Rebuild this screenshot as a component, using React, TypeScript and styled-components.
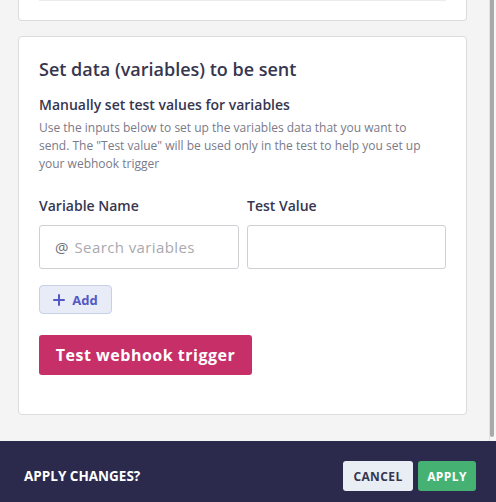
import React from "react";
import styled, { createGlobalStyle } from "styled-components";

const Global = createGlobalStyle`
  html, body { margin: 0; padding: 0; }
  body { font-family: "Open Sans", "Lato", sans-serif; background: #f4f4f4; }
  * { box-sizing: border-box; }
`;

const Page = styled.div`
  width: 496px;
  height: 502px;
  display: flex;
  flex-direction: column;
  overflow: hidden;
  background: #f4f4f4;
`;

const Body = styled.div`
  height: 441px;
  flex-shrink: 0;
  display: flex;
`;

const Content = styled.div`
  flex: 1;
  padding: 0 22px 0 18px;
  display: flex;
  flex-direction: column;
  gap: 15px;
`;

const ScrollTrack = styled.div`
  width: 8px;
  border-left: 1px solid #e2e2e2;
  background: #f6f6f6;
  padding: 0 2px 4px 0;
  display: flex;
`;

const Thumb = styled.div`
  flex: 1;
  background: #a9a9a9;
  border-radius: 0 0 3px 3px;
`;

const CardTail = styled.div`
  height: 21px;
  background: #fff;
  border: 1px solid #dcdcdc;
  border-top: none;
  border-radius: 0 0 4px 4px;
  padding: 0 20px;
`;

const TailLine = styled.div`
  height: 1px;
  background: #ececf0;
`;

const Card = styled.div`
  background: #fff;
  border: 1px solid #dcdcdc;
  border-radius: 4px;
  padding: 19px 20px 0 20px;
  height: 379px;
  display: flex;
  flex-direction: column;
`;

const Title = styled.h2`
  margin: 0;
  font-size: 18px;
  font-weight: 600;
  color: #36364f;
  line-height: 26px;
`;

const Subtitle = styled.h3`
  margin: 13px 0 0;
  font-size: 14px;
  font-weight: 600;
  color: #36364f;
  line-height: 20px;
`;

const Para = styled.p`
  margin: 4px 0 0;
  font-size: 12px;
  line-height: 18px;
  color: #7a7a88;
  padding-right: 10px;
`;

const Grid = styled.div`
  margin-top: 24px;
  display: grid;
  grid-template-columns: 200px 199px;
  column-gap: 8px;
  row-gap: 10px;
`;

const Label = styled.div`
  font-size: 14px;
  font-weight: 600;
  color: #36364f;
  line-height: 18px;
`;

const InputBox = styled.div`
  height: 44px;
  border: 1px solid #cfcfd4;
  border-radius: 3px;
  display: flex;
  align-items: center;
  padding-left: 15px;
  gap: 6px;
  color: #a9a9b0;
  font-size: 15px;
  letter-spacing: 0.4px;
`;

const At = styled.span`
  color: #707078;
  font-size: 15px;
  letter-spacing: 0;
`;

const AddButton = styled.button`
  margin-top: 16px;
  align-self: flex-start;
  width: 73px;
  height: 29px;
  background: #e8ecf7;
  border: 1px solid #c8cfe6;
  border-radius: 4px;
  display: flex;
  align-items: center;
  justify-content: center;
  gap: 7px;
  color: #5558c4;
  font-family: inherit;
  font-weight: 700;
  font-size: 13px;
  padding: 0;
`;

const PrimaryButton = styled.button`
  margin-top: 21px;
  align-self: flex-start;
  width: 213px;
  height: 40px;
  background: #c72f69;
  border: none;
  border-radius: 3px;
  color: #fff;
  font-family: inherit;
  font-weight: 700;
  font-size: 16px;
  letter-spacing: 0.5px;
`;

const Footer = styled.div`
  height: 70px;
  flex-shrink: 0;
  background: #2b2a4c;
  display: flex;
  align-items: center;
  padding: 0 20px 0 24px;
`;

const FooterText = styled.div`
  flex: 1;
  color: #fff;
  font-weight: 700;
  font-size: 13.5px;
`;

const FooterButton = styled.button<{ $primary?: boolean }>`
  height: 30px;
  width: ${(p) => (p.$primary ? 58 : 70)}px;
  padding: 0;
  margin-left: 5px;
  border: none;
  border-radius: 3px;
  background: ${(p) => (p.$primary ? "#45b274" : "#e9edf4")};
  color: ${(p) => (p.$primary ? "#fff" : "#36364f")};
  font-family: inherit;
  font-weight: 700;
  font-size: 12px;
  letter-spacing: 0.4px;
`;

export default function App() {
  return (
    <Page>
      <Global />
      <Body>
        <Content>
          <CardTail>
            <TailLine />
          </CardTail>
          <Card>
            <Title>Set data (variables) to be sent</Title>
            <Subtitle>Manually set test values for variables</Subtitle>
            <Para>
              Use the inputs below to set up the variables data that you want to
              send. The "Test value" will be used only in the test to help you set up
              your webhook trigger
            </Para>
            <Grid>
              <Label>Variable Name</Label>
              <Label>Test Value</Label>
              <InputBox>
                <At>@</At>
                <span>Search variables</span>
              </InputBox>
              <InputBox />
            </Grid>
            <AddButton>
              <svg width="12" height="12" viewBox="0 0 12 12">
                <path d="M6 1v10M1 6h10" stroke="#5558c4" strokeWidth="2" strokeLinecap="round" />
              </svg>
              Add
            </AddButton>
            <PrimaryButton>Test webhook trigger</PrimaryButton>
          </Card>
        </Content>
        <ScrollTrack>
          <Thumb />
        </ScrollTrack>
      </Body>
      <Footer>
        <FooterText>APPLY CHANGES?</FooterText>
        <FooterButton>CANCEL</FooterButton>
        <FooterButton $primary>APPLY</FooterButton>
      </Footer>
    </Page>
  );
}
